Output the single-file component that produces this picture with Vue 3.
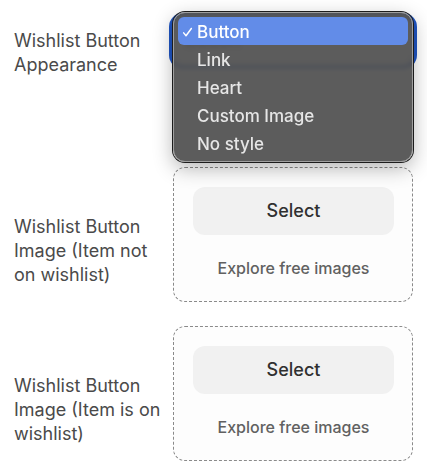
<template>
  <form class="settings" @submit.prevent>
    <div class="row">
      <label class="label label-select" for="appearance">Wishlist Button Appearance</label>
      <div class="field field-select">
        <select id="appearance" v-model="selected" class="select">
          <option v-for="name in options" :key="name">{{ name }}</option>
        </select>
        <div v-if="open" class="menu" role="listbox" aria-label="Wishlist Button Appearance">
          <button
            v-for="name in options"
            :key="name"
            type="button"
            role="option"
            class="option"
            :class="{ active: name === selected }"
            :aria-selected="name === selected"
            @click="choose(name)"
          >
            <svg v-if="name === selected" class="check" viewBox="0 0 12 12" aria-hidden="true">
              <path d="M1.8 6.4 4.4 9.6 10.2 1.6" />
            </svg>
            <span class="option-name">{{ name }}</span>
          </button>
        </div>
      </div>
    </div>

    <div v-for="picker in pickers" :key="picker.id" class="row">
      <label class="label label-image" :for="picker.id">{{ picker.label }}</label>
      <div class="field card">
        <button :id="picker.id" type="button" class="select-btn">Select</button>
        <a href="#" class="explore" @click.prevent>Explore free images</a>
      </div>
    </div>
  </form>
</template>

<script setup>
import { ref } from 'vue'

const options = ['Button', 'Link', 'Heart', 'Custom Image', 'No style']

const pickers = [
  { id: 'image-off', label: 'Wishlist Button Image (Item not on wishlist)' },
  { id: 'image-on', label: 'Wishlist Button Image (Item is on wishlist)' },
]

const selected = ref('Button')
const open = ref(true)

function choose(name) {
  selected.value = name
  open.value = false
}
</script>

<style>
body {
  background: #fff;
}
</style>

<style scoped>
*, *::before, *::after { box-sizing: border-box; }

.settings {
  display: flex;
  flex-direction: column;
  gap: 24px;
  padding: 17px 14px 12px;
  font-family: Inter, sans-serif;
  font-size: 18px;
  line-height: 24px;
  color: #4a4a4a;
}

.row {
  display: grid;
  grid-template-columns: 159px 1fr;
  align-items: start;
}

.label { padding-right: 8px; }
.label-select { padding-top: 12px; }
.label-image { padding-top: 48px; }

/* Drop-down */
.field-select {
  position: relative;
  min-height: 126px;
}

.select {
  display: block;
  width: 100%;
  height: 48px;
  padding: 0 12px;
  border: none;
  border-radius: 10px;
  background: #f1f1f1;
  color: #303030;
  font: inherit;
  appearance: none;
  box-shadow: 0 0 0 4px #1f55c4;
}

.menu {
  position: absolute;
  z-index: 1;
  top: -5px;
  left: 0;
  right: 0;
  padding: 4px;
  border: 1px solid #a0a0a0;
  border-radius: 12px;
  background: rgba(82, 82, 82, 0.94);
  backdrop-filter: blur(2px);
  box-shadow: 0 0 0 1px #1c1c1c, 0 6px 20px rgba(0, 0, 0, 0.3);
}

.option {
  display: flex;
  align-items: center;
  width: 100%;
  height: 28px;
  padding: 2px 4px 0;
  border: none;
  border-radius: 6px;
  background: none;
  color: #e6e6e6;
  font: inherit;
  font-size: 17px;
  font-weight: 500;
  text-align: left;
}

.option.active {
  background: #628ce8;
  color: #fff;
}

.check {
  width: 11px;
  height: 11px;
  fill: none;
  stroke: currentColor;
  stroke-width: 1.6;
  stroke-linecap: round;
  stroke-linejoin: round;
}

.option-name { margin-left: 15px; }
.check + .option-name { margin-left: 4px; }

/* Image picker */
.card {
  display: flex;
  flex-direction: column;
  gap: 20px;
  padding: 19px 18px 20px 19px;
  border: 1px dashed #8a8a8a;
  border-radius: 12px;
  background: #fdfdfd;
}

.select-btn {
  height: 48px;
  border: none;
  border-radius: 12px;
  background: #f1f1f1;
  color: #303030;
  font: inherit;
  font-weight: 500;
}

.explore {
  color: #616161;
  font-size: 16px;
  font-weight: 500;
  line-height: 26px;
  text-align: center;
  text-decoration: none;
}
</style>
